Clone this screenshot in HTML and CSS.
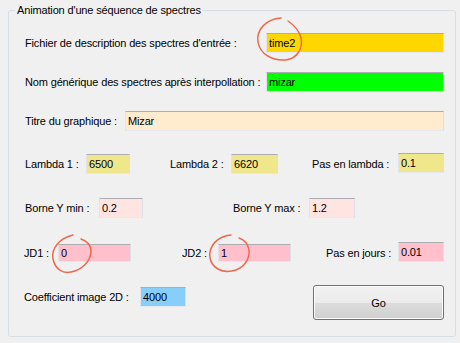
FILE: index.html
```html
<!DOCTYPE html>
<html lang="fr">
<head>
    <meta charset="UTF-8">
    <title>Animation d'une séquence de spectres</title>
    <link rel="stylesheet" href="styles.css">
</head>
<body>
<fieldset class="group">
    <legend>Animation d'une séquence de spectres</legend>

    <div class="row row-1">
        <label class="lbl lbl-fichier">Fichier de description des spectres d'entrée :</label>
        <input class="field f-wide gold" type="text" value="time2">
    </div>
    <div class="row row-2">
        <label class="lbl lbl-fichier">Nom générique des spectres après interpollation :</label>
        <input class="field f-wide lime" type="text" value="mizar">
    </div>
    <div class="row row-3">
        <label class="lbl lbl-titre">Titre du graphique :</label>
        <input class="field f-titre almond" type="text" value="Mizar">
    </div>
    <div class="row row-4">
        <label class="lbl lbl-l1">Lambda 1 :</label>
        <input class="field f-l1 khaki" type="text" value="6500">
        <label class="lbl lbl-l2">Lambda 2 :</label>
        <input class="field f-l2 khaki" type="text" value="6620">
        <label class="lbl lbl-pas">Pas en lambda :</label>
        <input class="field f-pas khaki up" type="text" value="0.1">
    </div>
    <div class="row row-5">
        <label class="lbl lbl-ymin">Borne Y min :</label>
        <input class="field f-l1 rose" type="text" value="0.2">
        <label class="lbl lbl-ymax">Borne Y max :</label>
        <input class="field f-pas rose" type="text" value="1.2">
    </div>
    <div class="row row-6">
        <label class="lbl lbl-jd1">JD1 :</label>
        <input class="field f-jd pink" type="text" value="0">
        <label class="lbl lbl-jd2">JD2 :</label>
        <input class="field f-jd pink" type="text" value="1">
        <label class="lbl lbl-pasj">Pas en jours :</label>
        <input class="field f-pas pink tall up" type="text" value="0.01">
    </div>
    <div class="row row-7">
        <div class="coef">
            <label class="lbl lbl-coef">Coefficient image 2D :</label>
            <input class="field f-pas sky" type="text" value="4000">
        </div>
        <button class="go" type="button">Go</button>
    </div>
</fieldset>

<!-- hand-drawn marks over the form -->
<svg class="marks" width="460" height="343" viewBox="0 0 460 343">
    <path d="M281 18 C266 19 256 30 258 42 C260 54 272 61 286 60 C298 58 303 48 301 38 C299 30 294 25 288 21"/>
    <path d="M73 235 C60 238 51 248 53 259 C55 269 63 274 71 272 C82 270 91 261 91 251 C91 245 87 241 81 239"/>
    <path d="M231 235 C218 236 208 246 210 258 C212 268 222 273 232 271 C243 269 250 260 249 250 C248 244 245 240 239 238"/>
</svg>
</body>
</html>
```

FILE: styles.css
```css
/* General */
body {
    margin: 0;
    width: 460px;
    height: 343px;
    overflow: hidden;
    position: relative;
    background-color: #f0f0f0;
    font-family: "Liberation Sans", Arial, sans-serif;
    font-size: 11px;
    letter-spacing: -0.15px;
    color: #000;
}

/* Group box */
.group {
    margin: 4px 0 0 8px;
    width: 448px;
    box-sizing: border-box;
    border: 1px solid #d5dfe5;
    border-radius: 3px;
    padding: 0 0 16px 0;
    min-width: 0;
}

.group legend {
    margin-left: 6px;
    padding: 0 2px;
    line-height: 13px;
}

/* Rows */
.row {
    display: flex;
    align-items: center;
    height: 20px;
    padding: 0 11px 0 16px;
}

.row-1 { margin-top: 16px; }
.row-2 { margin-top: 19px; }
.row-3 { margin-top: 19px; }
.row-4 { margin-top: 23px; }
.row-5 { margin-top: 24px; }
.row-6 { margin-top: 25px; padding-left: 15px; }
.row-7 {
    margin-top: 22px;
    padding-left: 15px;
    height: 35px;
    align-items: flex-start;
}

.coef {
    display: flex;
    align-items: center;
    height: 20px;
    margin-top: 2px;
}

/* Labels */
.lbl {
    flex-shrink: 0;
    white-space: nowrap;
}

.lbl-fichier { width: 241px; }
.lbl-titre { width: 100px; }
.lbl-l1 { width: 61px; }
.lbl-l2 { width: 61px; margin-left: 40px; }
.lbl-pas { width: 86px; margin-left: 34px; }
.lbl-ymin { width: 74px; }
.lbl-ymax { width: 76px; margin-left: 90px; }
.lbl-jd1 { width: 34px; }
.lbl-jd2 { width: 36px; margin-left: 51px; }
.lbl-pasj { width: 72px; margin-left: 35px; }
.lbl-coef { width: 116px; }

/* Text boxes */
.field {
    flex-shrink: 0;
    box-sizing: border-box;
    height: 20px;
    margin: 0;
    padding: 0 2px;
    border: 1px solid;
    border-color: #abadb3 #dbdfe6 #e3e9ef #e2e3ea;
    border-radius: 0;
    font: inherit;
    letter-spacing: inherit;
    color: #000;
    outline: none;
}

.f-wide { width: 178px; }
.f-titre { width: 319px; }
.f-l1 { width: 44px; }
.f-l2 { width: 47px; }
.f-pas { width: 46px; }
.f-jd { width: 73px; height: 18px; }
.tall { height: 20px; }
.up { position: relative; top: -1px; }

.gold { background-color: #ffd700; }
.lime { background-color: #00ff00; }
.almond { background-color: #ffebcd; }
.khaki { background-color: #f0e68c; }
.rose { background-color: #ffe4e1; }
.pink { background-color: #ffc0cb; }
.sky { background-color: #87cefa; }

/* Go button */
.go {
    margin-left: auto;
    width: 131px;
    height: 35px;
    border: 1px solid #707070;
    border-radius: 3px;
    background: linear-gradient(#f2f2f2 0%, #ebebeb 50%, #dddddd 50%, #cfcfcf 100%);
    box-shadow: inset 0 0 0 1px #fcfcfc;
    font: inherit;
    letter-spacing: inherit;
    color: #000;
    padding: 0;
}

/* Red marks drawn over the screenshot */
.marks {
    position: absolute;
    left: 0;
    top: 0;
    pointer-events: none;
}

.marks path {
    fill: none;
    stroke: #f0684b;
    stroke-width: 1.5;
    stroke-linecap: round;
}
```
